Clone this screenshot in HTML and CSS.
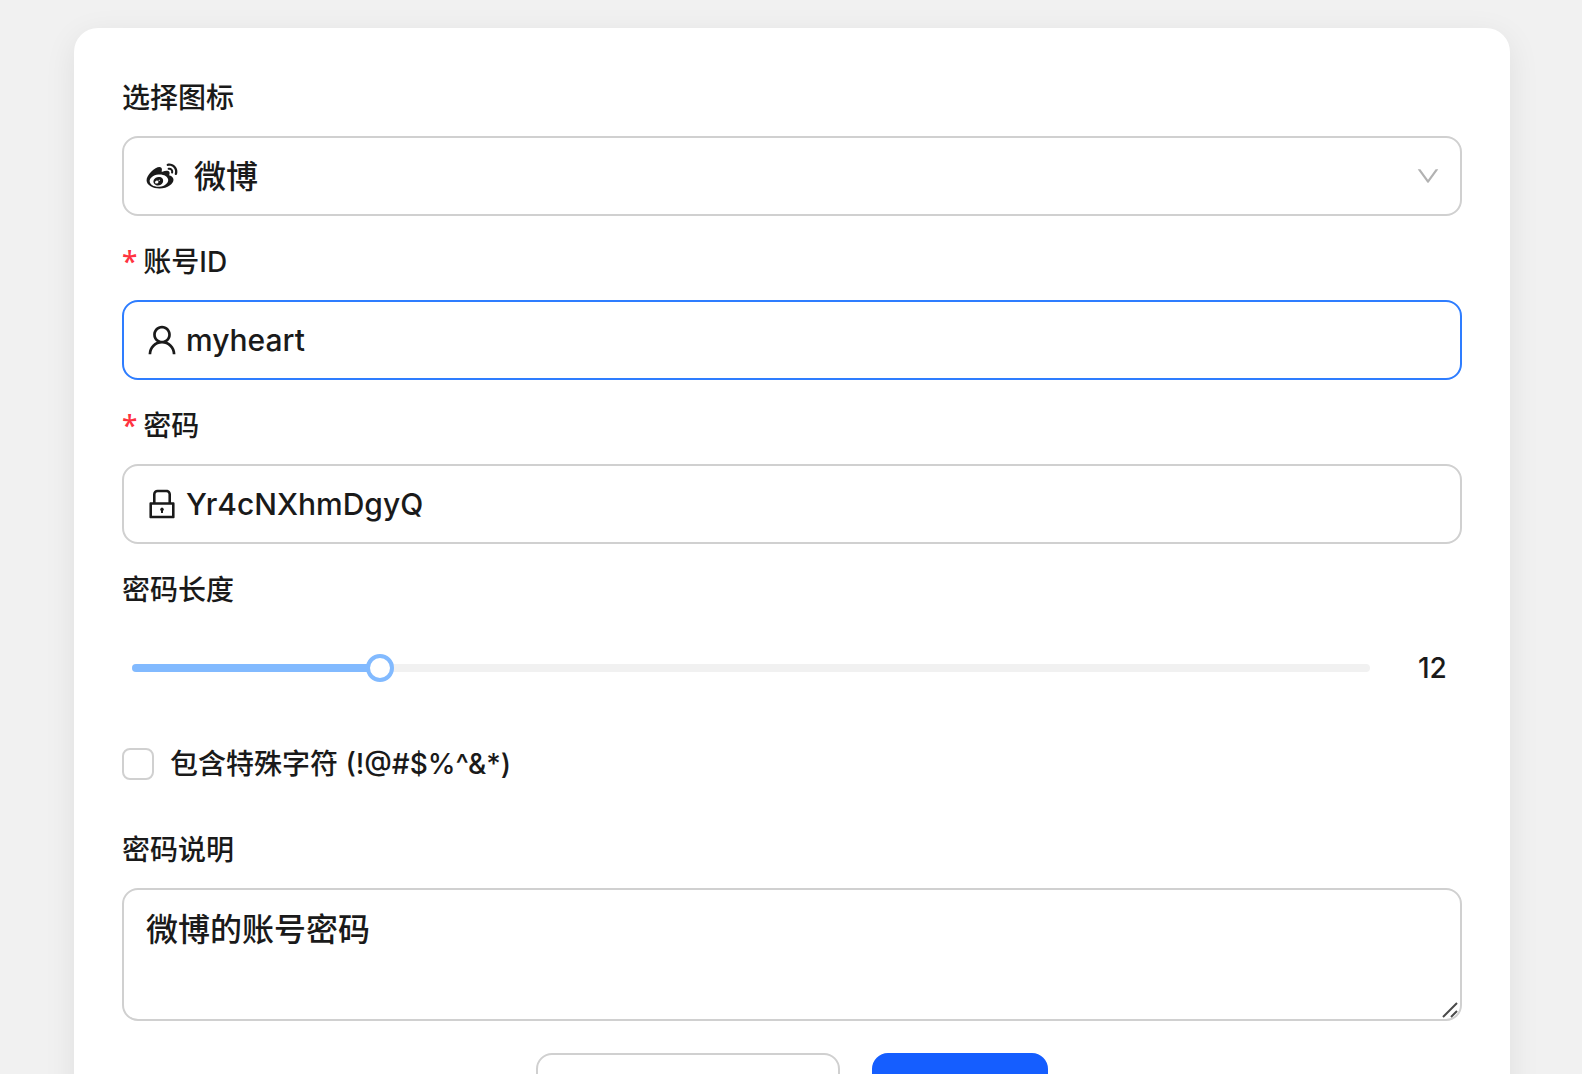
FILE: index.html
```html
<!DOCTYPE html>
<html lang="zh-CN">
<head>
<meta charset="utf-8">
<meta name="viewport" content="width=device-width, initial-scale=1">
<title>账号密码</title>
<link rel="stylesheet" href="styles.css">
</head>
<body>
<form class="card">
  <div class="field">
    <label class="label" for="icon">选择图标</label>
    <div class="control control-select">
      <svg class="icon" viewBox="64 64 896 896" aria-hidden="true"><path d="M457.3 543c-68.1-17.7-145 16.2-174.6 76.2-30.1 61.2-1 129.1 67.8 151.3 71.2 23 155.2-12.2 184.4-78.3 28.7-64.6-7.2-131-77.6-149.2zm-52 156.2c-13.8 22.1-43.5 31.7-65.8 21.6-22-10-28.5-35.7-14.6-57.2 13.7-21.4 42.3-31 64.4-21.7 22.4 9.5 29.6 35 16 57.3zm45.5-58.5c-5 8.6-16.1 12.7-24.7 9.1-8.5-3.5-11.2-13.1-6.4-21.5 5-8.4 15.6-12.4 24.1-9.1 8.7 3.2 11.8 12.9 7 21.5zm334.5-197.2c15 4.8 31-3.4 35.9-18.3 11.8-36.6 4.4-78.4-23.2-109a111.39 111.39 0 00-106-34.3 28.45 28.45 0 00-21.9 33.8 28.39 28.39 0 0033.8 21.8c18.4-3.9 38.3 1.8 51.9 16.7a54.2 54.2 0 0111.3 53.3 28.45 28.45 0 0018.2 36zm99.8-206c-56.7-62.9-140.4-86.9-217.7-70.5a32.98 32.98 0 00-25.4 39.3 33.12 33.12 0 0039.3 25.5c55-11.7 114.4 5.4 154.8 50.1 40.3 44.7 51.2 105.7 34 159.1-5.6 17.4 3.9 36 21.3 41.7 17.4 5.6 36-3.9 41.6-21.2v-.1c24.1-75.4 8.9-161.1-47.9-223.9zM729 499c-12.2-3.6-20.5-6.1-14.1-22.1 13.8-34.7 15.2-64.7.3-86-28-40.1-104.8-37.9-192.8-1.1 0 0-27.6 12.1-20.6-9.8 13.5-43.5 11.5-79.9-9.6-101-47.7-47.8-174.6 1.8-283.5 110.6C127.3 471.1 80 557.5 80 632.2 80 775.1 263.2 862 442.5 862c235 0 391.3-136.5 391.3-245 0-65.5-55.2-102.6-104.8-118zM443 810.8c-143 14.1-266.5-50.5-275.8-144.5-9.3-93.9 99.2-181.5 242.2-195.6 143-14.2 266.5 50.5 275.8 144.4C694.4 709 586 796.6 443 810.8z"/></svg>
      <select class="input" id="icon"><option>微博</option></select>
      <svg class="arrow" viewBox="64 64 896 896" aria-hidden="true"><path d="M884 256h-75c-5.1 0-9.9 2.5-12.9 6.6L512 654.2 227.9 262.6c-3-4.1-7.8-6.6-12.9-6.6h-75c-6.5 0-10.3 7.4-6.5 12.7l352.6 486.1c12.8 17.6 39 17.6 51.7 0l352.6-486.1c3.9-5.3.1-12.7-6.4-12.7z"/></svg>
    </div>
  </div>

  <div class="field">
    <label class="label required" for="account">账号ID</label>
    <div class="control control-active">
      <svg class="icon" viewBox="64 64 896 896" aria-hidden="true"><path d="M858.5 763.6a374 374 0 00-80.6-119.5 375.63 375.63 0 00-119.5-80.6c-.4-.2-.8-.3-1.2-.5C719.5 518 760 444.7 760 362c0-137-111-248-248-248S264 225 264 362c0 82.7 40.5 156 102.8 201.1-.4.2-.8.3-1.2.5-44.8 18.9-85 46-119.5 80.6a375.63 375.63 0 00-80.6 119.5A371.7 371.7 0 00136 901.8a8 8 0 008 8.2h60c4.4 0 7.9-3.5 8-7.8 2-77.2 33-149.5 87.8-204.3 56.7-56.7 132-87.9 212.2-87.9s155.5 31.2 212.2 87.9C779 752.7 810 825 812 902.2c.1 4.4 3.6 7.8 8 7.8h60a8 8 0 008-8.2c-1-47.8-10.9-94.3-29.5-138.2zM512 534c-45.9 0-89.1-17.9-121.6-50.4S340 407.9 340 362c0-45.9 17.9-89.1 50.4-121.6S466.1 190 512 190s89.1 17.9 121.6 50.4S684 316.1 684 362c0 45.9-17.9 89.1-50.4 121.6S557.9 534 512 534z"/></svg>
      <input class="input" id="account" type="text" value="myheart" spellcheck="false" required>
    </div>
  </div>

  <div class="field">
    <label class="label required" for="password">密码</label>
    <div class="control">
      <svg class="icon" viewBox="64 64 896 896" aria-hidden="true"><path d="M832 464h-68V240c0-70.7-57.3-128-128-128H388c-70.7 0-128 57.3-128 128v224h-68c-17.7 0-32 14.3-32 32v384c0 17.7 14.3 32 32 32h640c17.7 0 32-14.3 32-32V496c0-17.7-14.3-32-32-32zM332 240c0-30.9 25.1-56 56-56h248c30.9 0 56 25.1 56 56v224H332V240zm460 600H232V536h560v304zM484 701v53c0 4.4 3.6 8 8 8h40c4.4 0 8-3.6 8-8v-53a48.1 48.1 0 10-56 0z"/></svg>
      <input class="input" id="password" type="text" value="Yr4cNXhmDgyQ" spellcheck="false" required>
    </div>
  </div>

  <div class="field">
    <label class="label" for="length">密码长度</label>
    <div class="slider-row">
      <div class="slider">
        <div class="rail"><div class="rail-fill" style="width: 20%"></div></div>
        <input class="range" id="length" type="range" min="8" max="28" value="12">
      </div>
      <output class="slider-value" for="length">12</output>
    </div>
  </div>

  <div class="check-row">
    <input class="checkbox" id="special" type="checkbox">
    <label for="special">包含特殊字符 (!@#$%^&amp;*)</label>
  </div>

  <div class="field">
    <label class="label" for="note">密码说明</label>
    <div class="note">
      <textarea class="textarea" id="note" rows="2" spellcheck="false">微博的账号密码</textarea>
      <svg class="grip" viewBox="0 0 16 16" aria-hidden="true"><path d="M1 15L15 1M9 15L15 9"/></svg>
    </div>
  </div>

  <div class="actions">
    <button class="button button-default" type="button" aria-label="重新生成密码"></button>
    <button class="button button-primary" type="submit" aria-label="保存"></button>
  </div>
</form>
</body>
</html>
```
FILE: styles.css
```css
* {
  box-sizing: border-box;
}

html {
  scrollbar-width: none;
}

body {
  margin: 0;
  padding: 28px 72px 28px 74px;
  background: #f1f1f1;
  color: #1a1a1a;
  font: 500 28px/44px Inter, "Noto Sans CJK SC", sans-serif;
}

.card {
  display: flex;
  flex-direction: column;
  gap: 24px;
  padding: 48px;
  border-radius: 24px;
  background: #fff;
  box-shadow: 0 8px 32px rgba(0, 0, 0, 0.08);
}

.field {
  display: flex;
  flex-direction: column;
  gap: 16px;
}

.required::before {
  content: "*";
  margin-right: 6px;
  color: #ff3240;
  font-family: "Noto Sans", sans-serif;
  line-height: 1;
}

.control {
  display: flex;
  align-items: center;
  gap: 8px;
  height: 80px;
  padding: 0 22px;
  border: 2px solid #d0d0d0;
  border-radius: 16px;
}

.control-select {
  gap: 16px;
  padding-right: 20px;
}

.control-active {
  border-color: #2e7dff;
}

.icon {
  flex: none;
  width: 32px;
  height: 32px;
  fill: #1a1a1a;
}

.arrow {
  flex: none;
  width: 24px;
  height: 24px;
  fill: #b2b2b2;
}

.input {
  flex: 1;
  min-width: 0;
  height: 100%;
  margin: 0;
  padding: 0;
  border: 0;
  outline: 0;
  background: transparent;
  color: inherit;
  font-family: inherit;
  font-size: 30px;
  font-weight: inherit;
  appearance: none;
}

select.input {
  font-size: 32px;
}

.slider-row {
  display: flex;
  align-items: center;
  gap: 48px;
  height: 80px;
  padding: 0 16px 0 10px;
}

.slider {
  display: grid;
  flex: 1;
  align-items: center;
}

.rail,
.range {
  grid-area: 1 / 1;
}

.rail {
  height: 8px;
  border-radius: 4px;
  background: #f1f1f1;
  overflow: hidden;
}

.rail-fill {
  height: 100%;
  background: #82baff;
}

.range {
  height: 28px;
  margin: 0 -14px;
  background: transparent;
  appearance: none;
}

.range::-webkit-slider-thumb {
  width: 28px;
  height: 28px;
  border: 4px solid #82baff;
  border-radius: 50%;
  background: #fff;
  appearance: none;
}

.slider-value {
  width: 28px;
}

.check-row {
  display: flex;
  align-items: center;
  gap: 16px;
  height: 64px;
  margin-bottom: 8px;
}

.checkbox {
  width: 32px;
  height: 32px;
  margin: 0;
  border: 2px solid #d0d0d0;
  border-radius: 8px;
  background: #fff;
  appearance: none;
}

.note {
  position: relative;
  display: flex;
}

.textarea {
  flex: 1;
  height: 133px;
  margin: 0;
  padding: 16px 22px;
  border: 2px solid #d0d0d0;
  border-radius: 16px;
  outline: 0;
  background: transparent;
  color: inherit;
  font-family: inherit;
  font-size: 32px;
  font-weight: inherit;
  line-height: 48px;
  resize: none;
}

.grip {
  position: absolute;
  right: 4px;
  bottom: 3px;
  width: 16px;
  height: 16px;
  fill: none;
  stroke: #4a4a4a;
  stroke-width: 2;
}

.actions {
  display: flex;
  justify-content: center;
  gap: 32px;
  padding-top: 8px;
}

.button {
  height: 80px;
  border: 2px solid #d0d0d0;
  border-radius: 16px;
  background: #fff;
}

.button-default {
  width: 304px;
}

.button-primary {
  width: 176px;
  border-color: #155eff;
  background: #155eff;
}
```
